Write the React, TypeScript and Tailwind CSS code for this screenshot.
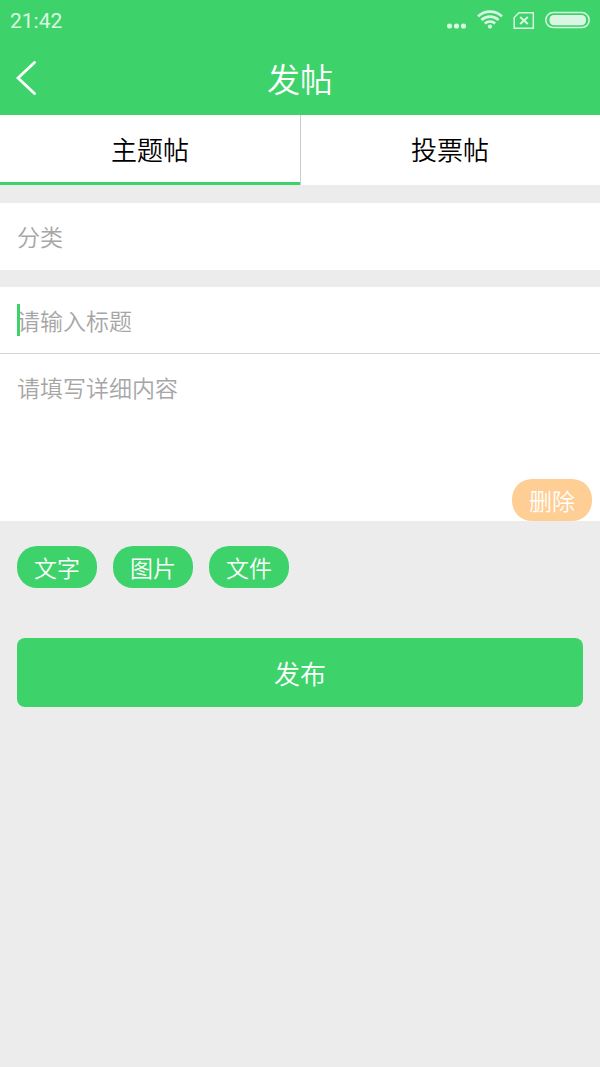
import { useState } from "react";

const tabs = ["主题帖", "投票帖"];
const attachments = ["文字", "图片", "文件"];

function StatusBar() {
  return (
    <div className="flex h-[42px] items-center justify-between px-2.5 text-white/80">
      <span className="pt-0.5 font-[Roboto,sans-serif] text-[21px] font-normal">21:42</span>
      <div className="flex items-center gap-2.5">
        <svg className="h-[22px] w-5" viewBox="0 0 20 22" fill="currentColor">
          <circle cx="2.5" cy="16" r="2.6" />
          <circle cx="9.5" cy="16" r="2.6" />
          <circle cx="16.5" cy="16" r="2.6" />
        </svg>
        <svg className="h-[22px] w-[26px]" viewBox="0 0 26 22" fill="none" stroke="currentColor" strokeWidth="2.6">
          <path d="M1 6.4a17.5 17.5 0 0 1 24 0" />
          <path d="M4.4 10a12.6 12.6 0 0 1 17.2 0" />
          <path d="M7.8 13.5a7.6 7.6 0 0 1 10.4 0" />
          <circle cx="13" cy="16.6" r="2.1" fill="currentColor" stroke="none" />
        </svg>
        <svg className="h-[22px] w-[22px]" viewBox="0 0 22 22" fill="none" stroke="currentColor" strokeWidth="1.5">
          <path d="M6 2.7h14.3v15.6H1.2V7.5z" />
          <path d="M7.2 7l7.6 7M14.8 7l-7.6 7" strokeWidth="2" />
        </svg>
        <svg className="h-[22px] w-[45px]" viewBox="0 0 45 22">
          <rect x="0.8" y="2.6" width="43.4" height="15" rx="7.5" fill="none" stroke="currentColor" strokeWidth="1.5" />
          <rect x="4.5" y="5" width="36.5" height="10.2" rx="4.5" fill="currentColor" />
        </svg>
      </div>
    </div>
  );
}

export default function App() {
  const [tab, setTab] = useState(tabs[0]);
  const [title, setTitle] = useState("");
  const [content, setContent] = useState("");

  return (
    <div className="min-h-screen bg-[#ececec] font-['Noto_Sans_CJK_SC',sans-serif] text-[23px] font-[350]">
      <header className="bg-[#3dd36a] text-white">
        <StatusBar />
        <div className="grid h-[73px] grid-cols-[1fr_auto_1fr] items-center px-4">
          <button type="button" aria-label="返回" className="justify-self-start">
            <svg className="h-9 w-5" viewBox="0 0 20 36" fill="none" stroke="currentColor" strokeWidth="2.8" strokeLinecap="round">
              <path d="M18.5 1.5L2 17l16.5 15.5" />
            </svg>
          </button>
          <h1 className="text-[33px]">发帖</h1>
        </div>
      </header>

      <div role="tablist" className="flex h-[70px] bg-white text-[26px] text-black">
        {tabs.map((name) => (
          <button
            key={name}
            type="button"
            role="tab"
            aria-selected={tab === name}
            onClick={() => setTab(name)}
            className={`flex-1 border-b-3 first:shadow-[1px_0_0_#cccccc] ${
              tab === name ? "border-[#3dd36a]" : "border-transparent"
            }`}
          >
            {name}
          </button>
        ))}
      </div>

      <form onSubmit={(e) => e.preventDefault()}>
        <button type="button" aria-haspopup="listbox" className="mt-[18px] block h-[67px] w-full bg-white px-[17px] text-left text-[#a6a6a6]">
          分类
        </button>

        <div className="relative mt-[17px] border-b border-[#d6d6d6] bg-white">
          <input
            aria-label="标题"
            placeholder="请输入标题"
            value={title}
            onChange={(e) => setTitle(e.target.value)}
            className="block h-[66px] w-full px-[17px] text-black caret-[#3dd36a] outline-none placeholder:text-[#a6a6a6]"
          />
          {!title && <span className="pointer-events-none absolute inset-y-[17px] left-[17px] w-[3px] bg-[#3dd36a]" />}
        </div>

        <div className="relative bg-white">
          <textarea
            aria-label="详细内容"
            placeholder="请填写详细内容"
            value={content}
            onChange={(e) => setContent(e.target.value)}
            className="block h-[167px] w-full resize-none px-[17px] py-4 leading-[34px] text-black outline-none placeholder:text-[#a6a6a6]"
          />
          <button
            type="button"
            onClick={() => setContent("")}
            className="absolute right-2 bottom-0 h-[42px] rounded-[20px] bg-[#ffce94] px-[17px] text-white"
          >
            删除
          </button>
        </div>

        <div className="flex gap-4 px-[17px] pt-[25px]">
          {attachments.map((name) => (
            <button key={name} type="button" className="h-[42px] rounded-[20px] bg-[#3dd36a] px-[17px] text-white">
              {name}
            </button>
          ))}
        </div>

        <div className="px-[17px] pt-[50px]">
          <button type="submit" className="h-[69px] w-full rounded-lg bg-[#3dd36a] text-[26px] text-white">
            发布
          </button>
        </div>
      </form>
    </div>
  );
}
